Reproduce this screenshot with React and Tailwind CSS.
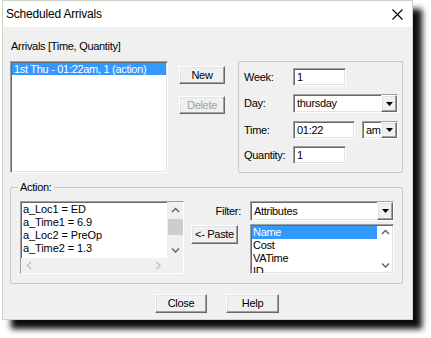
import React from 'react';

const sunken =
  'bg-white border border-t-[#a0a0a0] border-l-[#a0a0a0] border-r-white border-b-white shadow-[inset_1px_1px_0_#696969,inset_-1px_-1px_0_#e3e3e3]';
const raised =
  'bg-[#f0f0f0] border border-t-white border-l-white border-r-[#696969] border-b-[#696969] shadow-[inset_-1px_-1px_0_#a0a0a0,inset_1px_1px_0_#e3e3e3]';

function Chevron({ dir = 'up', color = '#606060' }) {
  const d = {
    up: 'M1 5 L4.5 1.5 L8 5',
    down: 'M1 1.5 L4.5 5 L8 1.5',
    left: 'M5 1 L1.5 4.5 L5 8',
    right: 'M1.5 1 L5 4.5 L1.5 8',
  }[dir];
  const vertical = dir === 'up' || dir === 'down';
  return (
    <svg width={vertical ? 9 : 7} height={vertical ? 7 : 9} viewBox={vertical ? '0 0 9 7' : '0 0 7 9'}>
      <path d={d} fill="none" stroke={color} strokeWidth="1.4" />
    </svg>
  );
}

function Button({ children, disabled, className = '' }) {
  return (
    <div className={`${raised} flex items-center justify-center ${disabled ? 'text-[#a0a0a0]' : 'text-black'} ${className}`}>
      {children}
    </div>
  );
}

function Select({ value, className = '' }) {
  return (
    <div className={`${sunken} flex items-center justify-between ${className}`}>
      <span className="pl-[3px] leading-none">{value}</span>
      <div className={`${raised} w-[16px] h-full flex items-center justify-center`}>
        <svg width="7" height="4" viewBox="0 0 7 4">
          <path d="M0 0 H7 L3.5 4 Z" fill="#000" />
        </svg>
      </div>
    </div>
  );
}

function Field({ value, className = '' }) {
  return (
    <div className={`${sunken} flex items-center pl-[3px] ${className}`}>{value}</div>
  );
}

export default function App() {
  return (
    <div
      className="w-[431px] h-[338px] bg-white pl-[2px] overflow-hidden text-[11px] text-black"
      style={{ fontFamily: '"Liberation Sans", Arial, sans-serif' }}
    >
      <div className="w-[411px] h-[320px] bg-[#f0f0f0] border border-[#cdd3c8] shadow-[9px_9px_6px_rgba(0,0,0,0.95)] flex flex-col">
        {/* title bar */}
        <div className="h-[26px] bg-white flex items-center justify-between pl-[3px] pr-[9px] shrink-0">
          <span className="text-[12px] tracking-[-0.2px]">Scheduled Arrivals</span>
          <svg width="11" height="11" viewBox="0 0 11 11">
            <path d="M0.5 0.5 L10.5 10.5 M10.5 0.5 L0.5 10.5" stroke="#000" strokeWidth="1.1" />
          </svg>
        </div>

        <div className="pl-[7px] pt-[12px] flex flex-col tracking-[-0.3px]">
          {/* top row */}
          <div className="flex items-start">
            <div className="flex flex-col w-[158px]">
              <div className="h-[14px] leading-[14px] pl-[1px]">Arrivals [Time, Quantity]</div>
              <div className={`${sunken} mt-[8px] h-[112px] p-[1px]`}>
                <div className="bg-[#3399ff] text-white h-[12px] leading-[12px] pl-[2px]">
                  1st Thu - 01:22am, 1 (action)
                </div>
              </div>
            </div>

            <div className="flex flex-col ml-[11px] mt-[27px] w-[46px]">
              <Button className="h-[18px]">New</Button>
              <Button disabled className="h-[18px] mt-[12px]">Delete</Button>
            </div>

            <div className="ml-[13px] mt-[22px] w-[165px] h-[112px] border border-[#c9c9c9] rounded-[2px] pl-[5px] pt-[6px] flex flex-col">
              <div className="flex items-center h-[18px]">
                <span className="w-[49px]">Week:</span>
                <Field value="1" className="w-[53px] h-[18px]" />
              </div>
              <div className="flex items-center h-[19px] mt-[8px]">
                <span className="w-[49px]">Day:</span>
                <Select value="thursday" className="w-[105px] h-[19px]" />
              </div>
              <div className="flex items-center h-[18px] mt-[8px]">
                <span className="w-[49px]">Time:</span>
                <Field value="01:22" className="w-[62px] h-[18px]" />
                <Select value="am" className="w-[36px] h-[18px] ml-[7px]" />
              </div>
              <div className="flex items-center h-[18px] mt-[7px]">
                <span className="w-[49px]">Quantity:</span>
                <Field value="1" className="w-[53px] h-[18px]" />
              </div>
            </div>
          </div>

          {/* action group */}
          <div className="relative mt-[14px] w-[393px] h-[97px] border border-[#c9c9c9] rounded-[2px] pl-[9px] pt-[13px] flex items-start">
            <span className="absolute left-[7px] top-[-7px] bg-[#f0f0f0] px-[2px] leading-[13px]">Action:</span>

            <div className={`${sunken} w-[164px] h-[73px] flex flex-col`}>
              <div className="flex flex-1 min-h-0">
                <div className="flex-1 pl-[2px] pt-[1px] leading-[13px] tracking-[-0.1px]">
                  <div>a_Loc1 = ED</div>
                  <div>a_Time1 = 6.9</div>
                  <div>a_Loc2 = PreOp</div>
                  <div>a_Time2 = 1.3</div>
                </div>
                <div className="w-[16px] bg-[#f0f0f0] flex flex-col items-center">
                  <div className="h-[16px] flex items-center justify-center"><Chevron dir="up" /></div>
                  <div className="w-[15px] h-[16px] bg-[#cdcdcd] mt-[1px]" />
                  <div className="flex-1" />
                  <div className="h-[16px] flex items-center justify-center"><Chevron dir="down" /></div>
                </div>
              </div>
              <div className="h-[15px] flex bg-[#f0f0f0]">
                <div className="flex-1 flex items-center justify-between px-[5px]">
                  <Chevron dir="left" color="#c0c0c0" />
                  <Chevron dir="right" color="#c0c0c0" />
                </div>
                <div className="w-[16px]" />
              </div>
            </div>

            <div className="w-[66px] flex flex-col">
              <div className="h-[20px] flex items-center justify-end pr-[9px]">Filter:</div>
              <Button className="w-[47px] h-[19px] ml-[7px] mt-[4px]">&lt;- Paste</Button>
            </div>

            <div className="w-[144px] flex flex-col">
              <Select value="Attributes" className="h-[20px]" />
              <div className={`${sunken} mt-[3px] h-[50px] flex overflow-hidden`}>
                <div className="flex-1 leading-[13px] pt-[1px] pl-[1px]">
                  <div className="bg-[#3399ff] text-white pl-[1px]">Name</div>
                  <div className="pl-[1px]">Cost</div>
                  <div className="pl-[1px]">VATime</div>
                  <div className="pl-[1px]">ID</div>
                </div>
                <div className="w-[16px] flex flex-col items-center justify-between py-[4px]">
                  <Chevron dir="up" />
                  <Chevron dir="down" />
                </div>
              </div>
            </div>
          </div>

          {/* bottom buttons */}
          <div className="flex mt-[10px] ml-[145px]">
            <Button className="w-[52px] h-[19px]">Close</Button>
            <Button className="w-[53px] h-[19px] ml-[19px]">Help</Button>
          </div>
        </div>
      </div>
    </div>
  );
}
